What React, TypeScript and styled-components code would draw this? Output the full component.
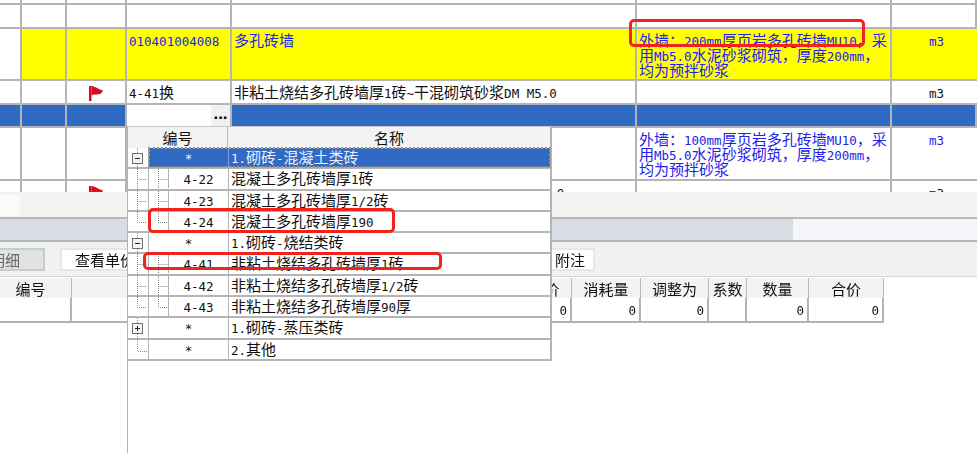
import React from "react";
import styled, { createGlobalStyle } from "styled-components";

const GRID_LINE = "#b4b4b4";
const SELECT_BLUE = "#316ac5";
const TEXT_BLUE = "#2222ee";
const COLUMNS = "22px 45px 60px 105px 405px 255px 1fr";
const WALL_200 = "外墙：200mm厚页岩多孔砖墙MU10，采用Mb5.0水泥砂浆砌筑，厚度200mm，均为预拌砂浆";
const WALL_100 = "外墙：100mm厚页岩多孔砖墙MU10，采用Mb5.0水泥砂浆砌筑，厚度200mm，均为预拌砂浆";

// the screenshot font has half width latin, so ascii runs get their own span
function Mixed({ text }: { text: string }) {
  const parts = text.split(/([\x00-\x7f]+)/).filter(Boolean);
  return (
    <>
      {parts.map((part, i) =>
        /^[\x00-\x7f]+$/.test(part) ? <Latin key={i}>{part}</Latin> : <span key={i}>{part}</span>
      )}
    </>
  );
}

function Flag() {
  return (
    <svg width="15" height="15" viewBox="0 0 15 15">
      <path d="M0 0h2.500v15H0z" fill="#c8141c" />
      <path d="M2.500 0C5 0 6 1 8 2c2 1 4 2 6 2.500-1 2.500-3 4-6 4-2 0-3.500-.5-5.500 1z" fill="#d80f1a" />
    </svg>
  );
}

type TreeKind = "minus" | "plus" | "corner" | "line" | "child" | "childLast";

function TreeGlyph({ kind }: { kind: TreeKind }) {
  const dots = { stroke: "#8a8a8a", strokeDasharray: "1 1", fill: "none" };
  if (kind === "child" || kind === "childLast") {
    return (
      <svg width="20" height="21" viewBox="0 0 20 21">
        <path d={kind === "child" ? "M9.500 0v21M9.500 10.500h9" : "M9.500 0v10.500h9"} {...dots} />
      </svg>
    );
  }
  return (
    <svg width="20" height="21" viewBox="0 0 20 21">
      {kind === "corner" ? (
        <path d="M9.500 0v11.500h10" {...dots} />
      ) : (
        <path d="M9.500 0v21" {...dots} />
      )}
      {(kind === "minus" || kind === "plus") && (
        <>
          <rect x="4.500" y="5.500" width="10" height="10" fill="#f4f4f4" stroke="#707070" />
          <path d="M7 10.500h5" stroke="#222" />
          {kind === "plus" && <path d="M9.500 8v5" stroke="#222" />}
        </>
      )}
    </svg>
  );
}

const groupRows: { tree: TreeKind; code: string; name: string; selected?: boolean; child?: boolean }[] = [
  { tree: "minus", code: "*", name: "1.砌砖-混凝土类砖", selected: true },
  { tree: "child", code: "4-22", name: "混凝土多孔砖墙厚1砖", child: true },
  { tree: "child", code: "4-23", name: "混凝土多孔砖墙厚1/2砖", child: true },
  { tree: "childLast", code: "4-24", name: "混凝土多孔砖墙厚190", child: true },
  { tree: "minus", code: "*", name: "1.砌砖-烧结类砖" },
  { tree: "child", code: "4-41", name: "非粘土烧结多孔砖墙厚1砖", child: true },
  { tree: "child", code: "4-42", name: "非粘土烧结多孔砖墙厚1/2砖", child: true },
  { tree: "childLast", code: "4-43", name: "非粘土烧结多孔砖墙厚90厚", child: true },
  { tree: "plus", code: "*", name: "1.砌砖-蒸压类砖" },
  { tree: "corner", code: "*", name: "2.其他" },
];

const detailColumns = [
  { title: "编号", width: 82, value: "" },
  { title: "", width: 446, value: "" },
  { title: "单价", width: 54, value: "0" },
  { title: "消耗量", width: 69, value: "0" },
  { title: "调整为", width: 68, value: "0" },
  { title: "系数", width: 38, value: "" },
  { title: "数量", width: 62, value: "0" },
  { title: "合价", width: 75, value: "0" },
];

export default function App() {
  return (
    <Page>
      <GlobalStyle />
      <TopGrid>
        <Row $height={5}>
          {[0, 1, 2, 3, 4, 5, 6].map((i) => (
            <Cell key={i} />
          ))}
        </Row>
        <Row $height={24}>
          {[0, 1, 2, 3, 4, 5, 6].map((i) => (
            <Cell key={i} />
          ))}
        </Row>
        <Row $height={52} $background="#ffff00" $color={TEXT_BLUE}>
          <Cell $background="#fff" />
          <Cell />
          <Cell />
          <Cell><Mixed text="010401004008" /></Cell>
          <Cell><Mixed text="多孔砖墙" /></Cell>
          <Cell><Mixed text={WALL_200} /></Cell>
          <Unit><Mixed text="m3" /></Unit>
        </Row>
        <Row $height={24}>
          <Cell />
          <Cell />
          <FlagCell><Flag /></FlagCell>
          <MiddleCell><Mixed text="4-41换" /></MiddleCell>
          <MiddleCell><Mixed text="非粘土烧结多孔砖墙厚1砖~干混砌筑砂浆DM M5.0" /></MiddleCell>
          <Cell />
          <MiddleUnit><Mixed text="m3" /></MiddleUnit>
        </Row>
        <Row $height={23} $background={SELECT_BLUE}>
          <Cell />
          <Cell />
          <Cell />
          <EditorCell><EllipsisButton>...</EllipsisButton></EditorCell>
          <Cell />
          <Cell />
          <Cell />
        </Row>
        <Row $height={53} $color={TEXT_BLUE}>
          <Cell />
          <Cell />
          <Cell />
          <Cell />
          <Cell />
          <Cell><Mixed text={WALL_100} /></Cell>
          <Unit><Mixed text="m3" /></Unit>
        </Row>
        <Row $height={24}>
          <Cell />
          <Cell />
          <FlagCell><Flag /></FlagCell>
          <MiddleCell><Mixed text="4-43换" /></MiddleCell>
          <MiddleCell><Mixed text="非粘土烧结多孔砖墙厚90厚~干混砌筑砂浆DM M5.0" /></MiddleCell>
          <Cell />
          <MiddleUnit><Mixed text="m3" /></MiddleUnit>
        </Row>
      </TopGrid>

      <SplitBar><SplitHandle /></SplitBar>
      <TabStrip><TabStripFill /></TabStrip>

      <Toolbar>
        <ToolButton $disabled $width={80} $offset={-35}><Mixed text="明细" /></ToolButton>
        <ToolButton $width={90} $offset={15}><Mixed text="查看单价" /></ToolButton>
        <ToolButton $width={50} $offset={395}><Mixed text="附注" /></ToolButton>
      </Toolbar>

      <DetailTable>
        <DetailRow $header>
          {detailColumns.map((c, i) => (
            <DetailCell key={i} $width={c.width} $header><Mixed text={c.title} /></DetailCell>
          ))}
        </DetailRow>
        <DetailRow>
          {detailColumns.map((c, i) => (
            <DetailCell key={i} $width={c.width}><Mixed text={c.value} /></DetailCell>
          ))}
        </DetailRow>
      </DetailTable>

      <Popup>
        <PopupHeader>
          <PopupTitle $width={100}><Mixed text="编号" /></PopupTitle>
          <PopupTitle $width={323}><Mixed text="名称" /></PopupTitle>
        </PopupHeader>
        {groupRows.map((row, i) => (
          <PopupRow key={i}>
            <TreeCell><TreeGlyph kind={row.tree} /></TreeCell>
            {row.child && <IndentCell><TreeGlyph kind={row.tree} /></IndentCell>}
            <PopupBody $selected={row.selected}>
              <CodeCell $child={row.child} $selected={row.selected}><Mixed text={row.code} /></CodeCell>
              <NameCell><Mixed text={row.name} /></NameCell>
            </PopupBody>
          </PopupRow>
        ))}
      </Popup>
      <PopupEdge />

      <Marker $left={629} $top={19} $width={236} $height={28} />
      <Marker $left={148} $top={208} $width={247} $height={25} />
      <Marker $left={143} $top={252} $width={299} $height={18} />
    </Page>
  );
}

const GlobalStyle = createGlobalStyle`
  html, body {
    margin: 0;
    background: #fff;
    overflow: hidden;
  }
`;

// the reference is a soft, rescaled capture
const Page = styled.div`
  position: relative;
  width: 977px;
  height: 453px;
  overflow: hidden;
  color: #111;
  font-family: "Noto Sans CJK SC", "Liberation Sans", sans-serif;
  font-size: 15px;
  line-height: 15px;
  filter: blur(0.3px);
`;

const Latin = styled.span`
  font-family: "DejaVu Sans Mono", monospace;
  font-size: 12.5px;
  line-height: 0;
`;

const TopGrid = styled.div`
  height: 192px;
  overflow: hidden;
`;

const Row = styled.div<{ $height: number; $background?: string; $color?: string }>`
  display: grid;
  grid-template-columns: ${COLUMNS};
  box-sizing: border-box;
  height: ${(p) => p.$height}px;
  background: ${(p) => p.$background ?? "#fff"};
  color: ${(p) => p.$color ?? "inherit"};
  border-bottom: 2px solid ${GRID_LINE};
`;

const Cell = styled.div<{ $background?: string }>`
  box-sizing: border-box;
  min-width: 0;
  padding: 3px 1px 0 2px;
  border-right: 2px solid ${GRID_LINE};
  background: ${(p) => p.$background ?? "transparent"};
`;

const MiddleCell = styled(Cell)`
  padding-top: 3px;
  white-space: nowrap;
`;

const Unit = styled(Cell)`
  padding-left: 37px;
  border-right: none;
`;

const MiddleUnit = styled(Unit)`
  padding-top: 3px;
`;

const FlagCell = styled(Cell)`
  display: flex;
  justify-content: center;
  padding: 5px 0 0 0;
`;

const EditorCell = styled(Cell)`
  display: flex;
  justify-content: flex-end;
  padding: 0;
  background: #fff;
`;

const EllipsisButton = styled.div`
  width: 19px;
  height: 21px;
  background: #f0f0f0;
  font-family: "Liberation Sans", sans-serif;
  font-size: 17px;
  font-weight: 700;
  line-height: 17px;
  text-align: center;
  color: #000;
`;

const SplitBar = styled.div`
  box-sizing: border-box;
  height: 27px;
  padding-top: 3px;
  background: #f3f3f3;
  border-bottom: 2px solid #b8b8b8;
`;

const SplitHandle = styled.div`
  width: 20px;
  height: 21px;
  background: #fafafa;
`;

const TabStrip = styled.div`
  box-sizing: border-box;
  height: 23px;
  background: #f3f5f8;
  border-bottom: 2px solid #a9b8bd;
`;

const TabStripFill = styled.div`
  width: 793px;
  height: 100%;
  background: #d8dce5;
`;

const Toolbar = styled.div`
  box-sizing: border-box;
  display: flex;
  align-items: flex-start;
  height: 35px;
  padding-top: 6px;
  background: #f1f1f1;
  border-bottom: 1px solid #d8d8d8;
`;

const ToolButton = styled.div<{ $disabled?: boolean; $width: number; $offset: number }>`
  box-sizing: border-box;
  flex: none;
  width: ${(p) => p.$width}px;
  height: 23px;
  margin-left: ${(p) => p.$offset}px;
  border: 2px solid ${(p) => (p.$disabled ? "#c4ccd0" : "#e4e6e8")};
  background: ${(p) => (p.$disabled ? "#e2e2e2" : "#fff")};
  color: ${(p) => (p.$disabled ? "#666" : "#111")};
  padding-top: 2px;
  text-align: center;
`;

const DetailTable = styled.div`
  width: 894px;
  margin: 1px 0 0 -10px;
`;

const DetailRow = styled.div<{ $header?: boolean }>`
  box-sizing: border-box;
  display: flex;
  height: ${(p) => (p.$header ? 20 : 25)}px;
  background: ${(p) => (p.$header ? "#f3f3f3" : "#fff")};
  border-bottom: ${(p) => (p.$header ? "none" : `2px solid ${GRID_LINE}`)};
`;

const DetailCell = styled.div<{ $width: number; $header?: boolean }>`
  box-sizing: border-box;
  flex: none;
  width: ${(p) => p.$width}px;
  padding: ${(p) => (p.$header ? "3px 0 0" : "3px 3px 0 0")};
  border-right: ${(p) => (p.$header ? "1px solid #b8b8b8" : `2px solid ${GRID_LINE}`)};
  text-align: ${(p) => (p.$header ? "center" : "right")};
`;

const Popup = styled.div`
  position: absolute;
  left: 127px;
  top: 126px;
  box-sizing: border-box;
  width: 425px;
  height: 235px;
  background: #fff;
  border: 2px solid ${GRID_LINE};
  border-top: 1px solid #c8c8c8;
  border-left-width: 1px;
`;

const PopupEdge = styled.div`
  position: absolute;
  left: 127px;
  top: 361px;
  bottom: 0;
  width: 1px;
  background: ${GRID_LINE};
`;

const PopupHeader = styled.div`
  display: flex;
  height: 21px;
  background: #f3f3f3;
`;

const PopupTitle = styled.div<{ $width: number }>`
  box-sizing: border-box;
  width: ${(p) => p.$width}px;
  padding-top: 3px;
  text-align: center;
  border-right: 1px solid #b8b8b8;
  &:last-child {
    border-right: none;
  }
`;

const PopupRow = styled.div`
  display: flex;
  box-sizing: border-box;
  height: 21.300px;
  border-bottom: 2px solid ${GRID_LINE};
`;

const TreeCell = styled.div`
  flex: none;
  width: 20px;
  height: 21px;
  overflow: hidden;
  border-right: 1px solid ${GRID_LINE};
`;

const IndentCell = styled.div`
  flex: none;
  width: 19px;
  height: 19px;
  overflow: hidden;
  border-right: 1px solid ${GRID_LINE};
`;

const PopupBody = styled.div<{ $selected?: boolean }>`
  display: flex;
  flex: 1;
  min-width: 0;
  background: ${(p) => (p.$selected ? SELECT_BLUE : "transparent")};
  color: ${(p) => (p.$selected ? "#e8efff" : "inherit")};
  outline: ${(p) => (p.$selected ? "2px dotted #a89a70" : "none")};
  outline-offset: -1px;
`;

const CodeCell = styled.div<{ $child?: boolean; $selected?: boolean }>`
  box-sizing: border-box;
  flex: none;
  width: ${(p) => (p.$child ? 60 : 80)}px;
  padding-top: 1px;
  text-align: center;
  border-right: 1px solid ${(p) => (p.$selected ? "#7f9fd8" : GRID_LINE)};
`;

const NameCell = styled.div`
  padding: 1px 0 0 2px;
  white-space: nowrap;
`;

const Marker = styled.div<{ $left: number; $top: number; $width: number; $height: number }>`
  position: absolute;
  left: ${(p) => p.$left}px;
  top: ${(p) => p.$top}px;
  box-sizing: border-box;
  width: ${(p) => p.$width}px;
  height: ${(p) => p.$height}px;
  border: 3px solid #f2231a;
  border-radius: 5px;
`;
